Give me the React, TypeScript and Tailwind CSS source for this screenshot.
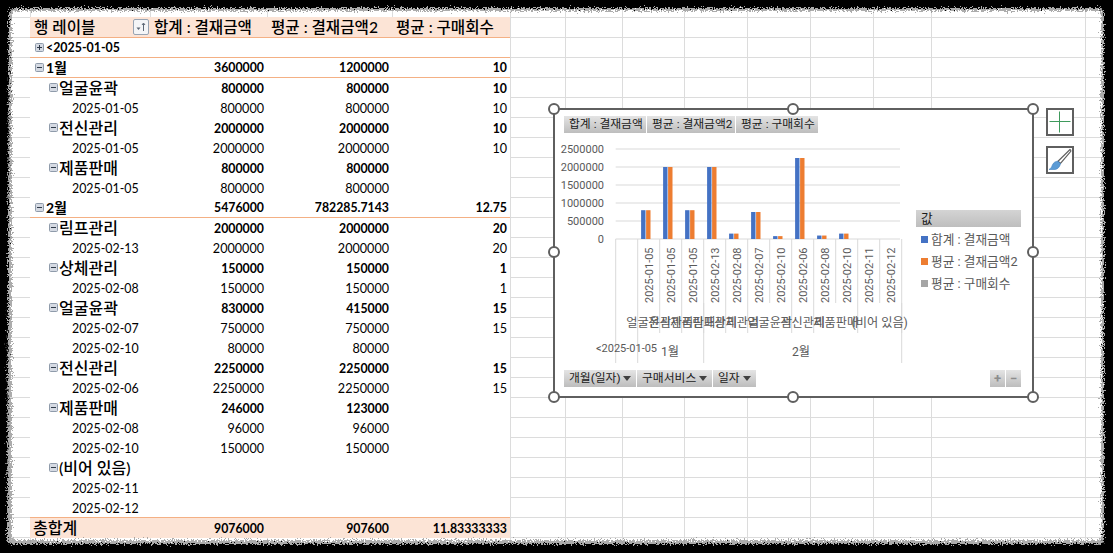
import type { ReactNode } from "react";

type RowKind = "top" | "month" | "service" | "date";

interface PivotRow {
  kind: RowKind;
  label: string;
  sum?: string;
  avg?: string;
  count?: string;
}

const rows: PivotRow[] = [
  { kind: "top", label: "<2025-01-05" },
  { kind: "month", label: "1월", sum: "3600000", avg: "1200000", count: "10" },
  { kind: "service", label: "얼굴윤곽", sum: "800000", avg: "800000", count: "10" },
  { kind: "date", label: "2025-01-05", sum: "800000", avg: "800000", count: "10" },
  { kind: "service", label: "전신관리", sum: "2000000", avg: "2000000", count: "10" },
  { kind: "date", label: "2025-01-05", sum: "2000000", avg: "2000000", count: "10" },
  { kind: "service", label: "제품판매", sum: "800000", avg: "800000" },
  { kind: "date", label: "2025-01-05", sum: "800000", avg: "800000" },
  { kind: "month", label: "2월", sum: "5476000", avg: "782285.7143", count: "12.75" },
  { kind: "service", label: "림프관리", sum: "2000000", avg: "2000000", count: "20" },
  { kind: "date", label: "2025-02-13", sum: "2000000", avg: "2000000", count: "20" },
  { kind: "service", label: "상체관리", sum: "150000", avg: "150000", count: "1" },
  { kind: "date", label: "2025-02-08", sum: "150000", avg: "150000", count: "1" },
  { kind: "service", label: "얼굴윤곽", sum: "830000", avg: "415000", count: "15" },
  { kind: "date", label: "2025-02-07", sum: "750000", avg: "750000", count: "15" },
  { kind: "date", label: "2025-02-10", sum: "80000", avg: "80000" },
  { kind: "service", label: "전신관리", sum: "2250000", avg: "2250000", count: "15" },
  { kind: "date", label: "2025-02-06", sum: "2250000", avg: "2250000", count: "15" },
  { kind: "service", label: "제품판매", sum: "246000", avg: "123000" },
  { kind: "date", label: "2025-02-08", sum: "96000", avg: "96000" },
  { kind: "date", label: "2025-02-10", sum: "150000", avg: "150000" },
  { kind: "service", label: "(비어 있음)" },
  { kind: "date", label: "2025-02-11" },
  { kind: "date", label: "2025-02-12" },
];

const sheetColumns = [
  "w-[31px]",
  "w-[120px]",
  "w-[117px]",
  "w-[125px]",
  "w-[118px]",
  "w-[55px]",
  "w-[57px]",
  "w-[62px]",
  "w-[63px]",
  "w-[63px]",
  "w-[63px]",
  "w-[58px]",
  "w-[154px]",
];

const chartBars = [
  { date: "2025-01-05", value: 800000 },
  { date: "2025-01-05", value: 2000000 },
  { date: "2025-01-05", value: 800000 },
  { date: "2025-02-13", value: 2000000 },
  { date: "2025-02-08", value: 150000 },
  { date: "2025-02-07", value: 750000 },
  { date: "2025-02-10", value: 80000 },
  { date: "2025-02-06", value: 2250000 },
  { date: "2025-02-08", value: 96000 },
  { date: "2025-02-10", value: 150000 },
  { date: "2025-02-11", value: 0 },
  { date: "2025-02-12", value: 0 },
];

const serviceLabels = [
  { label: "얼굴윤곽", from: 1, to: 2 },
  { label: "전신관리", from: 2, to: 3 },
  { label: "제품판매", from: 3, to: 4 },
  { label: "림프관리", from: 4, to: 5 },
  { label: "상체관리", from: 5, to: 6 },
  { label: "얼굴윤곽", from: 6, to: 8 },
  { label: "전신관리", from: 8, to: 9 },
  { label: "제품판매", from: 9, to: 11 },
  { label: "(비어 있음)", from: 11, to: 13 },
];

const handles = [
  "left-[-7px] top-[-7px]",
  "left-[232px] top-[-7px]",
  "right-[-7px] top-[-7px]",
  "left-[-7px] top-[136px]",
  "right-[-7px] top-[136px]",
  "bottom-[-7px] left-[-7px]",
  "bottom-[-7px] left-[232px]",
  "bottom-[-7px] right-[-7px]",
];

const PLOT_LEFT = 615.7;
const CAT_WIDTH = 22;

function catX(index: number) {
  return PLOT_LEFT + index * CAT_WIDTH;
}

function valueY(value: number) {
  return 239 - (value / 2500000) * 90;
}

function ExpandBox({ open }: { open: boolean }) {
  return (
    <svg width="9" height="9" viewBox="0 0 9 9" className="shrink-0">
      <rect x="0.5" y="0.5" width="8" height="8" rx="1" fill="#d5dae3" stroke="#8f9bab" />
      <path d="M2 4.5h5" stroke="#2f3a48" />
      {!open && <path d="M4.5 2v5" stroke="#2f3a48" />}
    </svg>
  );
}

function NumCell({ value, bold }: { value?: string; bold: boolean }) {
  return (
    <div className={`pr-[3px] text-right ${bold ? "text-[12.3px] font-bold" : ""}`}>{value}</div>
  );
}

function LabelCell({ row }: { row: PivotRow }) {
  if (row.kind === "date") {
    return <div className="pl-[42px] text-[12.4px]">{row.label}</div>;
  }
  if (row.kind === "service") {
    return (
      <div className="flex items-center gap-px pb-[2px] pl-[19px] text-[16px] font-medium">
        <ExpandBox open />
        {row.label}
      </div>
    );
  }
  return (
    <div className="flex items-center gap-[2px] pl-[5px] text-[12.4px] font-bold">
      <ExpandBox open={row.kind === "month"} />
      <span className={row.kind === "month" ? "text-[14px]" : ""}>{row.label}</span>
    </div>
  );
}

function PivotTable() {
  return (
    <div className="relative ml-[30px] w-[480px] bg-white text-[12.6px] leading-[19px] text-black">
      <div className="grid h-[21px] grid-cols-[120px_117px_125px_118px] items-center border-b border-[#f4b084] bg-[#fce4d6] text-[15.6px] font-medium">
        <div className="flex items-center justify-between pl-1 pr-px">
          행 레이블
          <div className="flex h-4 w-4 items-center justify-center rounded-[2px] border border-[#98a4b3] bg-[#f4f5f7]">
            <svg width="10" height="10" viewBox="0 0 10 10">
              <path d="M0.5 5.5h4l-2 2.5z" fill="#5c6775" />
              <path d="M7.5 9V1.5M6 3l1.5-2L9 3" fill="none" stroke="#5c6775" />
            </svg>
          </div>
        </div>
        <div className="pl-1">합계 : 결재금액</div>
        <div className="pl-1">평균 : 결재금액2</div>
        <div className="pl-1">평균 : 구매회수</div>
      </div>
      {rows.map((row, i) => {
        const bold = row.kind !== "date";
        const lined = row.kind === "top" || row.kind === "month";
        return (
          <div
            key={i}
            className={`grid h-5 grid-cols-[120px_117px_125px_118px] items-center ${
              lined ? "border-b border-[#f4b084]" : ""
            }`}
          >
            <LabelCell row={row} />
            <NumCell value={row.sum} bold={bold} />
            <NumCell value={row.avg} bold={bold} />
            <NumCell value={row.count} bold={bold} />
          </div>
        );
      })}
      <div className="-mt-px grid h-[21px] grid-cols-[120px_117px_125px_118px] items-center border-t border-[#f4b084] bg-[#fce4d6]">
        <div className="pb-[2px] pl-[3px] text-[16px] font-medium">총합계</div>
        <NumCell value="9076000" bold />
        <NumCell value="907600" bold />
        <NumCell value="11.83333333" bold />
      </div>
    </div>
  );
}

function Pill({ className, children }: { className: string; children: ReactNode }) {
  return (
    <div
      className={`flex h-[17px] items-center bg-gradient-to-b from-[#e4e4e4] to-[#bdbdbd] pl-[5px] text-[11.8px] text-[#1a1a1a] ${className}`}
    >
      {children}
    </div>
  );
}

function Caret() {
  return (
    <svg width="8" height="5" viewBox="0 0 8 5" className="ml-auto mr-[5px] shrink-0">
      <path d="M0 0h8L4 5z" fill="#404040" />
    </svg>
  );
}

function ChartPlot() {
  return (
    <svg
      width="352"
      height="237"
      viewBox="564 133 352 237"
      className="shrink-0 overflow-visible font-['Roboto',_'Noto_Sans_CJK_KR',_sans-serif]"
    >
      {[0, 1, 2, 3, 4, 5].map((i) => (
        <g key={i}>
          <line x1={PLOT_LEFT} x2={900} y1={239 - i * 18} y2={239 - i * 18} stroke="#d9d9d9" />
          <text x={604} y={243 - i * 18} textAnchor="end" fontSize="11" fill="#595959">
            {i * 500000}
          </text>
        </g>
      ))}

      {chartBars.map((bar, i) => {
        const x = catX(i + 1);
        const y = valueY(bar.value);
        return (
          <g key={i}>
            <rect x={x + 3.4} y={y} width={4.4} height={239 - y} fill="#4472c4" />
            <rect x={x + 8.4} y={y} width={4.4} height={239 - y} fill="#ed7d31" />
            <text
              transform={`translate(${x + 15.5} 303) rotate(-90)`}
              fontSize="11"
              fill="#595959"
            >
              {bar.date}
            </text>
            <line x1={x + CAT_WIDTH} x2={x + CAT_WIDTH} y1={239} y2={303} stroke="#d9d9d9" />
          </g>
        );
      })}

      <line x1={PLOT_LEFT} x2={PLOT_LEFT} y1={239} y2={363} stroke="#d9d9d9" />
      <line x1={catX(1)} x2={catX(1)} y1={239} y2={363} stroke="#d9d9d9" />
      <line x1={catX(4)} x2={catX(4)} y1={303} y2={363} stroke="#d9d9d9" />
      <line x1={catX(13)} x2={catX(13)} y1={303} y2={363} stroke="#d9d9d9" />

      {serviceLabels.map((s, i) => (
        <g key={i}>
          <line x1={catX(s.to)} x2={catX(s.to)} y1={303} y2={333} stroke="#d9d9d9" />
          <text
            x={(catX(s.from) + catX(s.to)) / 2}
            y={327}
            textAnchor="middle"
            fontSize="12.2"
            fill="#595959"
          >
            {s.label}
          </text>
        </g>
      ))}

      <text x={626.5} y={352} textAnchor="middle" fontSize="11" fill="#595959">
        {"<2025-01-05"}
      </text>
      <text x={670} y={356} textAnchor="middle" fontSize="12.2" fill="#595959">
        1월
      </text>
      <text x={801} y={356} textAnchor="middle" fontSize="12.2" fill="#595959">
        2월
      </text>
    </svg>
  );
}

function PivotChart() {
  return (
    <div className="absolute left-[553px] top-[108px] flex h-[290px] w-[481px] flex-col border-2 border-[#5f5f5f] bg-white pl-[9px] pr-[11px] pt-[6px] font-['Roboto',_'Noto_Sans_CJK_KR',_sans-serif]">
      {handles.map((pos) => (
        <div
          key={pos}
          className={`absolute h-3 w-3 rounded-full border-2 border-[#5f5f5f] bg-white ${pos}`}
        />
      ))}

      <div className="flex gap-px">
        <Pill className="w-[82px]">합계 : 결재금액</Pill>
        <Pill className="w-[88px]">평균 : 결재금액2</Pill>
        <Pill className="w-[82px]">평균 : 구매회수</Pill>
      </div>

      <div className="flex">
        <ChartPlot />
        <div className="w-[107px] pt-[77px] text-[12.7px] text-[#595959]">
          <div className="flex h-[17px] items-center bg-gradient-to-b from-[#d4d4d4] to-[#bebebe] pl-[5px] text-[#1a1a1a]">
            값
          </div>
          <div className="mt-1 flex flex-col gap-[5px] pl-[5px]">
            <div className="flex h-[17px] items-center gap-[3px]">
              <span className="h-[7px] w-[7px] bg-[#4472c4]" />
              합계 : 결재금액
            </div>
            <div className="flex h-[17px] items-center gap-[3px]">
              <span className="h-[7px] w-[7px] bg-[#ed7d31]" />
              평균 : 결재금액2
            </div>
            <div className="flex h-[17px] items-center gap-[3px]">
              <span className="h-[7px] w-[7px] bg-[#a5a5a5]" />
              평균 : 구매회수
            </div>
          </div>
        </div>
      </div>

      <div className="flex justify-between">
        <div className="flex gap-px">
          <Pill className="w-[72px]">
            개월(일자)
            <Caret />
          </Pill>
          <Pill className="w-[75px]">
            구매서비스
            <Caret />
          </Pill>
          <Pill className="w-[43px]">
            일자
            <Caret />
          </Pill>
        </div>
        <div className="flex gap-px">
          <Pill className="w-[15px] justify-center !pl-0 !text-[13px] font-bold !text-[#8c8c8c]">+</Pill>
          <Pill className="w-[15px] justify-center !pl-0 !text-[13px] font-bold !text-[#8c8c8c]">−</Pill>
        </div>
      </div>
    </div>
  );
}

function ChartTools() {
  return (
    <div className="absolute left-[1046px] top-[108px] flex flex-col gap-2.5">
      <div className="flex h-7 w-7 items-center justify-center border-2 border-[#5f5f5f] bg-white">
        <svg width="22" height="22" viewBox="0 0 22 22">
          <path d="M10.5 0.5v21M0.5 10.5h21" stroke="#3f9a5c" strokeWidth="1" />
        </svg>
      </div>
      <div className="h-7 w-7 border-2 border-[#5f5f5f] bg-white">
        <svg width="24" height="24" viewBox="0 0 24 24">
          <path d="M22 1.5c1 .5 1 1 .8 1.8L12.5 15.5l-2.5-2.3z" fill="#fff" stroke="#5f5f5f" strokeWidth="1.2" />
          <path d="M10 13.2l2.5 2.3c-.6 3.5-3 5.8-5.5 6H1c1.500-.8 2.500-2 3.300-4.300.9-2.500 3.200-4 5.700-4z" fill="#5b9bd5" stroke="#3f7fbf" strokeWidth="0.6" />
        </svg>
      </div>
    </div>
  );
}

// rough black edge of the screenshot, two noisy layers over each other
function TornFrame() {
  return (
    <svg width="1113" height="553" className="pointer-events-none absolute inset-0">
      <defs>
        <filter id="torn" x="-5%" y="-5%" width="110%" height="110%" colorInterpolationFilters="sRGB">
          <feTurbulence type="fractalNoise" baseFrequency="0.7" numOctaves="2" seed="4" />
          <feDisplacementMap in="SourceGraphic" scale="9" xChannelSelector="R" yChannelSelector="G" />
        </filter>
      </defs>
      <path
        filter="url(#torn)"
        fillRule="evenodd"
        fill="#8a8a8a"
        opacity="0.7"
        d="M-40-40H1153V593H-40ZM16 11Q12 11 12 15V536Q12 540 16 540H1097Q1101 540 1101 536V15Q1101 11 1097 11Z"
      />
      <path
        filter="url(#torn)"
        fillRule="evenodd"
        fill="#000"
        d="M-40-40H1153V593H-40ZM14 8Q9 8 9 13L7 538Q7 544 13 544H1099Q1104 544 1104 538V13Q1104 8 1099 8Z"
      />
    </svg>
  );
}

export default function App() {
  return (
    <div className="relative h-[553px] w-[1113px] overflow-hidden bg-white bg-[linear-gradient(#dcdcdc_1px,transparent_1px)] bg-[size:100%_20px] bg-[position:0_17px] pt-[17px] font-['Lato',_'Noto_Sans_CJK_KR',_sans-serif]">
      <div className="absolute inset-0 flex">
        {sheetColumns.map((col, i) => (
          <div key={i} className={`h-full border-r border-[#dcdcdc] ${col}`} />
        ))}
      </div>
      <PivotTable />
      <PivotChart />
      <ChartTools />
      <TornFrame />
    </div>
  );
}
